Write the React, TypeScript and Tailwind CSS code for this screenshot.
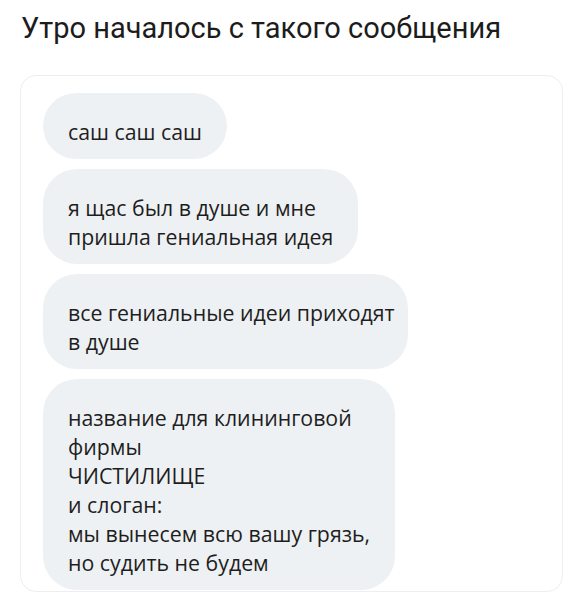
const messages: string[][] = [
  ['саш саш саш'],
  ['я щас был в душе и мне', 'пришла гениальная идея'],
  ['все гениальные идеи приходят', 'в душе'],
  [
    'название для клининговой',
    'фирмы',
    'ЧИСТИЛИЩЕ',
    'и слоган:',
    'мы вынесем всю вашу грязь,',
    'но судить не будем',
  ],
];

export default function App() {
  return (
    <div className="min-h-screen w-[579px] bg-white font-['Roboto',sans-serif]">
      <h1 className="px-[21px] pt-[10px] text-[29px] leading-[36px] text-[#1c1c1c]">
        Утро началось с такого сообщения
      </h1>

      <div className="ml-[20px] mr-[16px] mt-[29px] h-[517px] overflow-hidden rounded-[16px] border border-[#eceef0] px-[22px] pt-[17px]">
        <div className="flex flex-col items-start gap-[10px]">
          {messages.map((lines, i) => (
            <div
              key={i}
              className="w-fit max-w-[365px] rounded-[34px] bg-[#eef1f3] px-[25px] pt-[24px] pb-[13px] font-['Open_Sans',sans-serif] text-[21.3px] leading-[29px] text-[#1e1e1e]"
            >
              {lines.map((line, j) => (
                <div key={j} className="whitespace-nowrap">
                  {line}
                </div>
              ))}
            </div>
          ))}
        </div>
      </div>
    </div>
  );
}
